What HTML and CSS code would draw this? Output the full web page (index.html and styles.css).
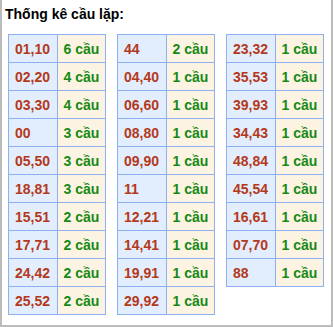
FILE: index.html
```html
<!DOCTYPE html>
<html>
<head>
<meta charset="utf-8">
<link rel="stylesheet" href="styles.css">
</head>
<body>
<div class="box">
  <div class="title">Thống kê cầu lặp:</div>
  <div class="tables">
    <table class="stat">
      <tr><td class="num">01,10</td><td class="cnt">6 cầu</td></tr>
      <tr><td class="num">02,20</td><td class="cnt">4 cầu</td></tr>
      <tr><td class="num">03,30</td><td class="cnt">4 cầu</td></tr>
      <tr><td class="num">00</td><td class="cnt">3 cầu</td></tr>
      <tr><td class="num">05,50</td><td class="cnt">3 cầu</td></tr>
      <tr><td class="num">18,81</td><td class="cnt">3 cầu</td></tr>
      <tr><td class="num">15,51</td><td class="cnt">2 cầu</td></tr>
      <tr><td class="num">17,71</td><td class="cnt">2 cầu</td></tr>
      <tr><td class="num">24,42</td><td class="cnt">2 cầu</td></tr>
      <tr><td class="num">25,52</td><td class="cnt">2 cầu</td></tr>
    </table>
    <table class="stat">
      <tr><td class="num">44</td><td class="cnt">2 cầu</td></tr>
      <tr><td class="num">04,40</td><td class="cnt">1 cầu</td></tr>
      <tr><td class="num">06,60</td><td class="cnt">1 cầu</td></tr>
      <tr><td class="num">08,80</td><td class="cnt">1 cầu</td></tr>
      <tr><td class="num">09,90</td><td class="cnt">1 cầu</td></tr>
      <tr><td class="num">11</td><td class="cnt">1 cầu</td></tr>
      <tr><td class="num">12,21</td><td class="cnt">1 cầu</td></tr>
      <tr><td class="num">14,41</td><td class="cnt">1 cầu</td></tr>
      <tr><td class="num">19,91</td><td class="cnt">1 cầu</td></tr>
      <tr><td class="num">29,92</td><td class="cnt">1 cầu</td></tr>
    </table>
    <table class="stat">
      <tr><td class="num">23,32</td><td class="cnt">1 cầu</td></tr>
      <tr><td class="num">35,53</td><td class="cnt">1 cầu</td></tr>
      <tr><td class="num">39,93</td><td class="cnt">1 cầu</td></tr>
      <tr><td class="num">34,43</td><td class="cnt">1 cầu</td></tr>
      <tr><td class="num">48,84</td><td class="cnt">1 cầu</td></tr>
      <tr><td class="num">45,54</td><td class="cnt">1 cầu</td></tr>
      <tr><td class="num">16,61</td><td class="cnt">1 cầu</td></tr>
      <tr><td class="num">07,70</td><td class="cnt">1 cầu</td></tr>
      <tr><td class="num">88</td><td class="cnt">1 cầu</td></tr>
    </table>
  </div>
</div>
</body>
</html>
```
FILE: styles.css
```css
html, body {
  margin: 0;
  padding: 0;
  background: #ffffff;
}
body {
  font-family: "Liberation Sans", Arial, sans-serif;
}
.box {
  width: 333px;
  box-sizing: border-box;
  border: 2px solid #bcbcbc;
  border-top: none;
  padding: 5px 7px 10px 6px;
}
.title {
  font-size: 14px;
  font-weight: bold;
  line-height: 18px;
  color: #000;
  margin-left: -3px;
  margin-bottom: 11px;
}
.tables {
  display: flex;
  align-items: flex-start;
  gap: 11px;
}
.stat {
  border-collapse: collapse;
  width: 98px;
  table-layout: fixed;
}
.stat td {
  border: 1px solid #8cb0f2;
  height: 28px;
  padding: 0 0 0 6px;
  font-size: 14px;
  font-weight: bold;
  text-align: left;
  box-sizing: border-box;
}
.num {
  background: #e2eefd;
  color: #b4391b;
}
.cnt {
  background: #fdf3e2;
  color: #168a16;
}
```
